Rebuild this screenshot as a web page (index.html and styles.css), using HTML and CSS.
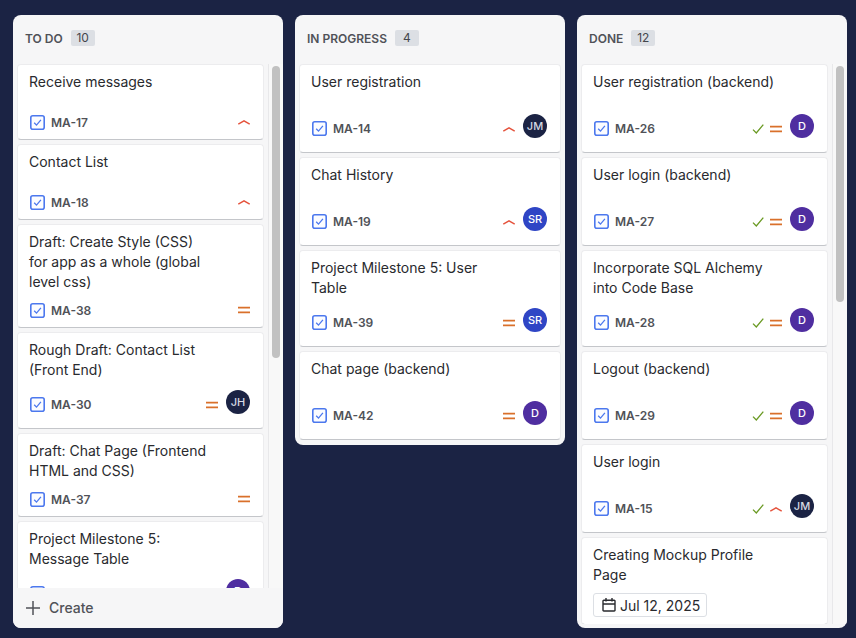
FILE: index.html
```html
<!DOCTYPE html>
<html lang="en">
<head>
    <meta charset="utf-8">
    <title>Board</title>
    <link rel="stylesheet" href="styles.css">
</head>
<body>
    <svg class="sprites" width="0" height="0">
        <symbol id="task" viewBox="0 0 15 15">
            <rect x="0.8" y="0.8" width="13.4" height="13.4" rx="2" fill="#fbfcff" stroke="#4c78ee" stroke-width="1.6"/>
            <path d="M4.2 7.7 L6.5 10.1 L10.9 4.9" fill="none" stroke="#4c78ee" stroke-width="1.3"/>
        </symbol>
        <symbol id="high" viewBox="0 0 16 16">
            <path d="M2.3 10.2 L8 6.8 L13.7 10.2" fill="none" stroke="#e5533d" stroke-width="1.4"/>
        </symbol>
        <symbol id="medium" viewBox="0 0 16 16">
            <path d="M2 5.6 H14 M2 10.4 H14" fill="none" stroke="#d9702b" stroke-width="1.6"/>
        </symbol>
        <symbol id="done" viewBox="0 0 16 16">
            <path d="M3 8.6 L6.3 12 L13.3 3.6" fill="none" stroke="#6a9a23" stroke-width="1.3"/>
        </symbol>
    </svg>

    <div class="board">
        <section class="column column-full">
            <h2 class="col-head">TO DO <span class="count">10</span></h2>
            <div class="col-body">
                <div class="cards">
                    <div class="card">
                        <p class="title">Receive messages</p>
                        <div class="foot">
                            <svg class="task"><use href="#task"/></svg><span class="key">MA-17</span>
                            <svg class="icon"><use href="#high"/></svg>
                        </div>
                    </div>
                    <div class="card">
                        <p class="title">Contact List</p>
                        <div class="foot">
                            <svg class="task"><use href="#task"/></svg><span class="key">MA-18</span>
                            <svg class="icon"><use href="#high"/></svg>
                        </div>
                    </div>
                    <div class="card">
                        <p class="title">Draft: Create Style (CSS) for app as a whole (global level css)</p>
                        <div class="foot">
                            <svg class="task"><use href="#task"/></svg><span class="key">MA-38</span>
                            <svg class="icon"><use href="#medium"/></svg>
                        </div>
                    </div>
                    <div class="card">
                        <p class="title">Rough Draft: Contact List (Front End)</p>
                        <div class="foot has-avatar">
                            <svg class="task"><use href="#task"/></svg><span class="key">MA-30</span>
                            <svg class="icon"><use href="#medium"/></svg>
                            <span class="avatar navy">JH</span>
                        </div>
                    </div>
                    <div class="card">
                        <p class="title">Draft: Chat Page (Frontend HTML and CSS)</p>
                        <div class="foot">
                            <svg class="task"><use href="#task"/></svg><span class="key">MA-37</span>
                            <svg class="icon"><use href="#medium"/></svg>
                        </div>
                    </div>
                    <div class="card">
                        <p class="title">Project Milestone 5: Message Table</p>
                        <div class="foot has-avatar">
                            <svg class="task"><use href="#task"/></svg><span class="key"></span>
                            <span class="avatar purple">D</span>
                        </div>
                    </div>
                </div>
                <div class="track"><div class="thumb thumb-todo"></div></div>
            </div>
            <div class="create">
                <svg class="plus" viewBox="0 0 14 14"><path d="M7 0 V14 M0 7 H14" fill="none" stroke="#505258" stroke-width="1.5"/></svg>
                Create
            </div>
        </section>

        <section class="column column-short">
            <h2 class="col-head">IN PROGRESS <span class="count">4</span></h2>
            <div class="col-body">
                <div class="cards">
                    <div class="card">
                        <p class="title">User registration</p>
                        <div class="foot has-avatar">
                            <svg class="task"><use href="#task"/></svg><span class="key">MA-14</span>
                            <svg class="icon"><use href="#high"/></svg>
                            <span class="avatar navy">JM</span>
                        </div>
                    </div>
                    <div class="card">
                        <p class="title">Chat History</p>
                        <div class="foot has-avatar">
                            <svg class="task"><use href="#task"/></svg><span class="key">MA-19</span>
                            <svg class="icon"><use href="#high"/></svg>
                            <span class="avatar blue">SR</span>
                        </div>
                    </div>
                    <div class="card">
                        <p class="title">Project Milestone 5: User Table</p>
                        <div class="foot has-avatar">
                            <svg class="task"><use href="#task"/></svg><span class="key">MA-39</span>
                            <svg class="icon"><use href="#medium"/></svg>
                            <span class="avatar blue">SR</span>
                        </div>
                    </div>
                    <div class="card">
                        <p class="title">Chat page (backend)</p>
                        <div class="foot has-avatar">
                            <svg class="task"><use href="#task"/></svg><span class="key">MA-42</span>
                            <svg class="icon"><use href="#medium"/></svg>
                            <span class="avatar purple">D</span>
                        </div>
                    </div>
                </div>
            </div>
        </section>

        <section class="column column-full">
            <h2 class="col-head">DONE <span class="count">12</span></h2>
            <div class="col-body">
                <div class="cards">
                    <div class="card">
                        <p class="title">User registration (backend)</p>
                        <div class="foot has-avatar">
                            <svg class="task"><use href="#task"/></svg><span class="key">MA-26</span>
                            <svg class="icon tick"><use href="#done"/></svg>
                            <svg class="icon"><use href="#medium"/></svg>
                            <span class="avatar purple">D</span>
                        </div>
                    </div>
                    <div class="card">
                        <p class="title">User login (backend)</p>
                        <div class="foot has-avatar">
                            <svg class="task"><use href="#task"/></svg><span class="key">MA-27</span>
                            <svg class="icon tick"><use href="#done"/></svg>
                            <svg class="icon"><use href="#medium"/></svg>
                            <span class="avatar purple">D</span>
                        </div>
                    </div>
                    <div class="card">
                        <p class="title">Incorporate SQL Alchemy into Code Base</p>
                        <div class="foot has-avatar">
                            <svg class="task"><use href="#task"/></svg><span class="key">MA-28</span>
                            <svg class="icon tick"><use href="#done"/></svg>
                            <svg class="icon"><use href="#medium"/></svg>
                            <span class="avatar purple">D</span>
                        </div>
                    </div>
                    <div class="card">
                        <p class="title">Logout (backend)</p>
                        <div class="foot has-avatar">
                            <svg class="task"><use href="#task"/></svg><span class="key">MA-29</span>
                            <svg class="icon tick"><use href="#done"/></svg>
                            <svg class="icon"><use href="#medium"/></svg>
                            <span class="avatar purple">D</span>
                        </div>
                    </div>
                    <div class="card">
                        <p class="title">User login</p>
                        <div class="foot has-avatar">
                            <svg class="task"><use href="#task"/></svg><span class="key">MA-15</span>
                            <svg class="icon tick"><use href="#done"/></svg>
                            <svg class="icon"><use href="#high"/></svg>
                            <span class="avatar navy">JM</span>
                        </div>
                    </div>
                    <div class="card">
                        <p class="title">Creating Mockup Profile Page</p>
                        <span class="date">
                            <svg class="cal" viewBox="0 0 16 16"><path d="M2.75 3.25 H13.25 A0.75 0.75 0 0 1 14 4 V13.25 A0.75 0.75 0 0 1 13.25 14 H2.75 A0.75 0.75 0 0 1 2 13.25 V4 A0.75 0.75 0 0 1 2.75 3.25 Z M2 7 H14 M5 1 V4.5 M11 1 V4.5" fill="none" stroke="#292a2e" stroke-width="1.4"/></svg>
                            Jul 12, 2025
                        </span>
                    </div>
                </div>
                <div class="track"><div class="thumb thumb-done"></div></div>
            </div>
        </section>
    </div>
</body>
</html>
```

FILE: styles.css
```css
body {
    margin: 0;
    height: 638px;
    overflow: hidden;
    background-color: #1b2344;
    font-family: Inter, "Liberation Sans", sans-serif;
    color: #292a2e;
}
.sprites {
    display: block;
    height: 0;
}
.board {
    display: flex;
    align-items: flex-start;
    gap: 12px;
    padding: 15px 0 0 13px;
}
.column {
    display: flex;
    flex: none;
    flex-direction: column;
    width: 270px;
    background: #f6f6f7;
    border-radius: 8px;
    overflow: hidden;
}
.column-full {
    height: 613px;
}
.column-short {
    padding-bottom: 5px;
}
.col-head {
    display: flex;
    align-items: center;
    flex: none;
    height: 49px;
    margin: 0;
    padding-left: 12px;
    padding-bottom: 3px;
    box-sizing: border-box;
    font-size: 12px;
    font-weight: 600;
    color: #505258;
}
.count {
    display: inline-block;
    margin-left: 8px;
    min-width: 24px;
    height: 16px;
    padding: 0 4px;
    box-sizing: border-box;
    background: #dcdfe4;
    border-radius: 2px;
    font-weight: 400;
    line-height: 16px;
    text-align: center;
    color: #44464c;
}
.col-body {
    display: flex;
    flex: 1;
    min-height: 0;
    overflow: hidden;
}
.column-full .col-body {
    margin-bottom: 4px;
}
.cards {
    flex: 1;
    min-width: 0;
    display: flex;
    flex-direction: column;
    gap: 4px;
    padding: 0 4px;
}
.card {
    flex: none;
    padding: 7px 11px 7px 11px;
    background: #fff;
    border: 1px solid #ececee;
    border-bottom-color: #c4c6ca;
    border-radius: 4px;
}
.title {
    margin: 0;
    padding-right: 40px;
    min-height: 32px;
    margin-bottom: 8px;
    font-size: 14px;
    line-height: 20px;
}
.foot {
    display: flex;
    align-items: center;
    height: 20px;
}
.has-avatar {
    height: 33px;
}
.task {
    flex: none;
    width: 15px;
    height: 15px;
    margin-left: 1px;
}
.key {
    flex: 1;
    margin-left: 6px;
    font-size: 12px;
    font-weight: 600;
    color: #505258;
}
.icon {
    flex: none;
    width: 16px;
    height: 16px;
}
.tick {
    margin-right: 2px;
}
.avatar {
    flex: none;
    align-self: flex-start;
    width: 24px;
    height: 24px;
    margin: 2px 2px 0 6px;
    border-radius: 50%;
    font-size: 11px;
    font-weight: 500;
    line-height: 24px;
    text-align: center;
    color: #fff;
}
.navy {
    background: #1b2344;
    color: #d5d8e2;
}
.blue {
    background: #2f45c5;
}
.purple {
    background: #4f2ea0;
}
.date {
    display: inline-flex;
    align-items: center;
    height: 22px;
    padding: 0 6px 0 7px;
    border: 1px solid #dcdfe4;
    border-radius: 3px;
    font-size: 14px;
}
.cal {
    width: 16px;
    height: 16px;
    margin-right: 3px;
}
.track {
    flex: none;
    width: 15px;
    box-sizing: border-box;
    padding: 2px 3px 0;
    border-left: 1px solid #e8e8ea;
    background: #f8f8f8;
}
.thumb {
    width: 8px;
    background: #c1c1c1;
    border-radius: 4px;
}
.thumb-todo {
    height: 292px;
}
.thumb-done {
    height: 236px;
}
.create {
    display: flex;
    align-items: center;
    flex: none;
    height: 40px;
    margin-top: -4px;
    padding-left: 13px;
    padding-bottom: 1px;
    box-sizing: border-box;
    background: #f6f6f7;
    font-size: 14px;
    font-weight: 500;
    color: #505258;
}
.plus {
    width: 14px;
    height: 14px;
    margin-right: 9px;
}
```
